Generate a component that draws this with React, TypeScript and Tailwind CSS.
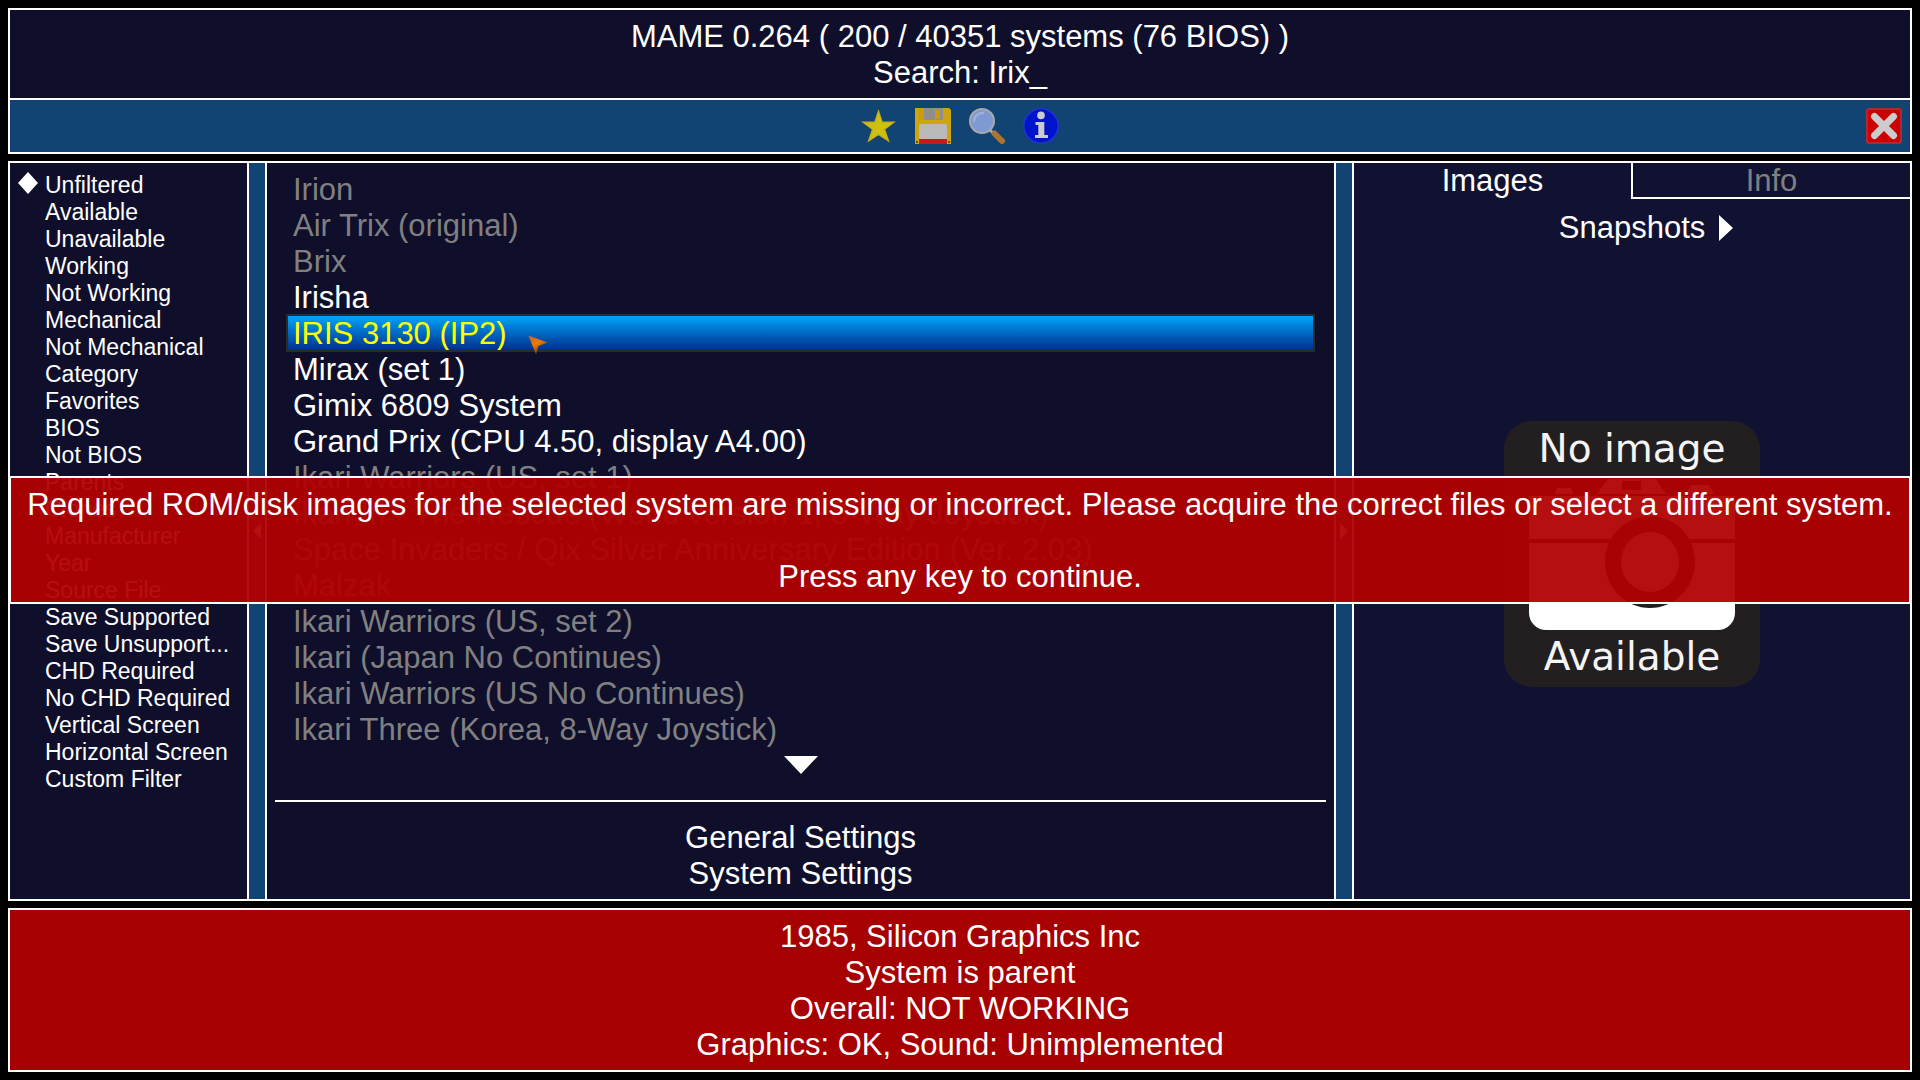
import React from 'react';

type System = { name: string; dim?: boolean };

const filters: string[] = [
  'Unfiltered', 'Available', 'Unavailable', 'Working', 'Not Working', 'Mechanical',
  'Not Mechanical', 'Category', 'Favorites', 'BIOS', 'Not BIOS', 'Parents', 'Clones',
  'Manufacturer', 'Year', 'Source File', 'Save Supported', 'Save Unsupport...',
  'CHD Required', 'No CHD Required', 'Vertical Screen', 'Horizontal Screen', 'Custom Filter',
];

const systems: System[] = [
  { name: 'Irion', dim: true },
  { name: 'Air Trix (original)', dim: true },
  { name: 'Brix', dim: true },
  { name: 'Irisha' },
  { name: 'IRIS 3130 (IP2)' },
  { name: 'Mirax (set 1)' },
  { name: 'Gimix 6809 System' },
  { name: 'Grand Prix (CPU 4.50, display A4.00)' },
  { name: 'Ikari Warriors (US, set 1)', dim: true },
  { name: 'Ikari III - The Rescue (World version 1, 8-Way Joystick)', dim: true },
  { name: 'Space Invaders / Qix Silver Anniversary Edition (Ver. 2.03)', dim: true },
  { name: 'Malzak', dim: true },
  { name: 'Ikari Warriors (US, set 2)', dim: true },
  { name: 'Ikari (Japan No Continues)', dim: true },
  { name: 'Ikari Warriors (US No Continues)', dim: true },
  { name: 'Ikari Three (Korea, 8-Way Joystick)', dim: true },
];

const selected = 'IRIS 3130 (IP2)';

function StarIcon() {
  return (
    <svg viewBox="0 0 36 36" className="size-9" aria-hidden="true">
      <path d="M17.5 1 L21.6 13.6 H35 L24.3 21.6 L28.8 34.6 L17.5 27.2 L6.4 34.6 L10.8 21.6 L0 13.6 H13.4 Z" fill="#ccac14" />
      <path d="M17.5 4.5 L20.8 15 H31.8 L22.8 21.4 L26.6 32 L17.5 25.6 L8.6 32 L12.4 21.4 L3.6 15 H14.4 Z" fill="#ccc010" />
    </svg>
  );
}

function SaveIcon() {
  return (
    <svg viewBox="0 0 36 36" className="size-9" aria-hidden="true">
      <path d="M0 0 H34 L36 2 V36 H0 Z" fill="#cca50f" />
      <rect x="4" y="0" width="5" height="12" fill="#cc9a10" />
      <rect x="9" y="0" width="19" height="12" fill="#8e8e8e" />
      <rect x="20" y="2" width="5" height="9" fill="#cc9a10" />
      <rect x="4" y="16" width="28" height="15" rx="1" fill="#b9b9b9" />
      <rect x="4" y="31" width="28" height="5" fill="#c81a1a" />
      <rect x="1" y="33" width="2" height="2" fill="#5a5420" />
      <rect x="33" y="33" width="2" height="2" fill="#5a5420" />
    </svg>
  );
}

function SearchIcon() {
  return (
    <svg viewBox="0 0 36 36" className="size-9" aria-hidden="true">
      <path d="M21 22 L25 26" stroke="#a8a8a8" strokeWidth="3" />
      <path d="M25.5 25.5 L33 33" stroke="#ae7330" strokeWidth="6" strokeLinecap="round" />
      <circle cx="13" cy="13" r="12" fill="#7f9ad2" stroke="#a9a9ab" strokeWidth="2" />
      <path d="M5 13 A8.5 8.5 0 0 1 14 5" stroke="#9bb0dc" strokeWidth="2.5" fill="none" strokeLinecap="round" />
    </svg>
  );
}

function InfoIcon() {
  return (
    <svg viewBox="0 0 36 36" className="size-9" aria-hidden="true">
      <circle cx="18" cy="18" r="17.2" fill="#0014cc" stroke="#1f35cc" strokeWidth="1.6" />
      <circle cx="18" cy="7.4" r="3.8" fill="#ccc" />
      <path d="M12.5 14 H21.3 V27 H25 V30 H12 V27 H15.3 V17 H12.5 Z" fill="#ccc" />
    </svg>
  );
}

function CloseIcon() {
  return (
    <svg viewBox="0 0 36 36" className="size-9" aria-hidden="true">
      <rect x="1" y="1" width="34" height="34" rx="2" fill="#cc0000" stroke="#ab2a36" strokeWidth="2" />
      <path d="M8.5 8.5 L27.5 27.5 M27.5 8.5 L8.5 27.5" stroke="#ccc" strokeWidth="7" strokeLinecap="round" />
    </svg>
  );
}

function NoImage() {
  return (
    <svg viewBox="0 0 256 266" className="w-64" role="img" aria-label="No image available">
      <rect width="256" height="266" rx="28" fill="#231f20" />
      <g fill="#fff">
        <path d="M51 73 L53 67 H67 L69 73 Z" />
        <path d="M93 73 L104 58 H152 L162 73 Z" />
        <path d="M182 73 L187 64 H205 L210 73 Z" />
        <path d="M25 75 H231 V118 H25 Z" />
        <path d="M25 122 H231 V192 A17 17 0 0 1 214 209 H42 A17 17 0 0 1 25 192 Z" />
      </g>
      <rect x="118" y="60" width="19" height="9" fill="#231f20" />
      <ellipse cx="146" cy="141" rx="45" ry="46" fill="#231f20" />
      <ellipse cx="146" cy="141" rx="29" ry="30" fill="#fff" />
      <text x="128" y="41" textAnchor="middle" fill="#f4f4f4" className="font-['DejaVu_Sans'] text-[39px]">No image</text>
      <text x="128" y="249" textAnchor="middle" fill="#f4f4f4" className="font-['DejaVu_Sans'] text-[39px]">Available</text>
    </svg>
  );
}

function Divider({ side }: { side: 'left' | 'right' }) {
  return (
    <button
      aria-label={side === 'left' ? 'Toggle filters' : 'Toggle info'}
      className="flex w-5 shrink-0 items-center justify-center border-x-2 border-white bg-[#114472]"
    >
      <svg viewBox="0 0 8 16" className="h-4 w-2" aria-hidden="true">
        <path d={side === 'left' ? 'M8 0 V16 L0 8 Z' : 'M0 0 V16 L8 8 Z'} fill="#fff" />
      </svg>
    </button>
  );
}

function Pointer() {
  return (
    <svg viewBox="0 0 20 20" className="absolute top-5 left-[241px] size-5" aria-hidden="true">
      <defs>
        <linearGradient id="pointer" x1="0" y1="0" x2="0.6" y2="1">
          <stop offset="0" stopColor="#c8641e" />
          <stop offset="0.5" stopColor="#ef7a0a" />
          <stop offset="1" stopColor="#6b3208" />
        </linearGradient>
      </defs>
      <path d="M0.5 0.5 L19.5 7.5 L10.5 11 L8 19.5 Z" fill="url(#pointer)" />
    </svg>
  );
}

export default function App() {
  return (
    <div className="relative flex min-h-screen flex-col gap-[7px] bg-black p-2 font-['Liberation_Sans',sans-serif] text-[31px] leading-9 text-white">
      <header className="border-2 border-white bg-[#0f0f2b]">
        <div className="border-b-2 border-white pt-[9px] pb-[7px] text-center">
          <h1>MAME 0.264 ( 200 / 40351 systems (76 BIOS) )</h1>
          <p>Search: Irix_</p>
        </div>
        <div className="relative flex justify-center gap-[18px] bg-[#114472] p-2">
          <button aria-label="Favorites"><StarIcon /></button>
          <button aria-label="Export"><SaveIcon /></button>
          <button aria-label="Search"><SearchIcon /></button>
          <button aria-label="Info"><InfoIcon /></button>
          <button aria-label="Close" className="absolute top-2 right-2"><CloseIcon /></button>
        </div>
      </header>

      <main className="flex grow border-2 border-white bg-[#0f0f2b]">
        <nav aria-label="Filters" className="w-[237px] shrink-0 pt-[9px] pr-2 pb-[7px] text-[23px] leading-[27px]">
          <ul>
            {filters.map((f, i) => (
              <li key={f} className="flex">
                <span className="flex w-[35px] shrink-0 items-start pl-2">
                  {i === 0 && (
                    <svg viewBox="0 0 20 22" className="h-[22px] w-5" aria-hidden="true">
                      <path d="M10 0 L20 11 L10 22 L0 11 Z" fill="#fff" />
                    </svg>
                  )}
                </span>
                <button className="min-w-0 truncate text-left">{f}</button>
              </li>
            ))}
          </ul>
        </nav>
        <Divider side="left" />
        <section aria-label="Systems" className="flex min-w-0 grow flex-col justify-between px-2 py-2 leading-[38px]">
          <div>
            <ul className="px-3">
              {systems.map((s) =>
                s.name === selected ? (
                  <li key={s.name} className="relative bg-linear-to-b from-[#00a8ff] to-[#002c88] text-[#ffff00] outline-2 -outline-offset-1 outline-[#2b2b2b]">
                    <button className="block h-9 w-full px-1.5 text-left">{s.name}</button>
                    <Pointer />
                  </li>
                ) : (
                  <li key={s.name} className={s.dim ? 'text-[#808080]' : 'text-white'}>
                    <button className="block h-9 w-full px-1.5 text-left whitespace-nowrap">{s.name}</button>
                  </li>
                ),
              )}
            </ul>
            <button aria-label="Scroll down" className="flex h-9 w-full items-center justify-center">
              <svg viewBox="0 0 34 18" className="h-[18px] w-[34px]" aria-hidden="true">
                <path d="M0 0 H34 L17 18 Z" fill="#fff" />
              </svg>
            </button>
          </div>
          <div>
            <hr className="mb-[17px] border-t-2 border-white" />
            <button className="block h-9 w-full">General Settings</button>
            <button className="block h-9 w-full">System Settings</button>
          </div>
        </section>
        <Divider side="right" />
        <aside className="flex w-[556px] shrink-0 flex-col bg-[#111231]">
          <div role="tablist" className="flex">
            <button role="tab" aria-selected="true" className="h-9 flex-1 leading-9">Images</button>
            <button role="tab" aria-selected="false" className="h-9 flex-1 border-b-2 border-l-2 border-white leading-9 text-[#808080]">Info</button>
          </div>
          <button className="relative mt-[11px] self-center">
            Snapshots
            <svg viewBox="0 0 14 26" className="absolute top-[5px] left-full ml-3.5 h-[26px] w-3.5" aria-hidden="true">
              <path d="M0 0 V26 L14 13 Z" fill="#fff" />
            </svg>
          </button>
          <div className="flex grow items-center justify-center pb-[38px]">
            <NoImage />
          </div>
        </aside>
      </main>

      <footer className="border-2 border-white bg-[#a60000] pt-[9px] pb-[7px] text-center">
        <p>1985, Silicon Graphics Inc</p>
        <p>System is parent</p>
        <p>Overall: NOT WORKING</p>
        <p>Graphics: OK, Sound: Unimplemented</p>
      </footer>

      <div className="absolute inset-0 flex items-center px-[9px]">
        <div role="alertdialog" aria-label="Error" className="w-full border-2 border-white bg-[#b20000]/94 pt-[9px] pb-[7px] text-center">
          <p className="whitespace-nowrap">Required ROM/disk images for the selected system are missing or incorrect. Please acquire the correct files or select a different system.</p>
          <p className="mt-9">Press any key to continue.</p>
        </div>
      </div>
    </div>
  );
}
